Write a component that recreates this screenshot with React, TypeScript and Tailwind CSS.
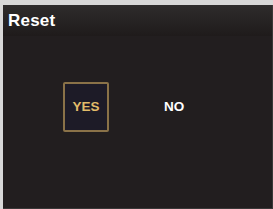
import React from 'react';

export default function App() {
  return (
    <div className="w-[273px] h-[209px] bg-[#d8d8d8] pt-[5px] pl-[3px] overflow-hidden" style={{ fontFamily: '"Liberation Sans", Arial, sans-serif' }}>
      <div className="flex flex-col h-full bg-[#221e1f] border-r border-b border-[#3a3838]">
        <div className="h-[31px] flex items-center px-[5px] bg-gradient-to-b from-[#2e2c2c] to-[#1f1b1b]">
          <span className="text-white font-bold text-[17px] tracking-[0.2px]">Reset</span>
        </div>
        <div className="flex-1 flex items-start pt-[46px]">
          <div className="ml-[60px] w-[46px] h-[50px] border-2 border-[#8a7248] rounded-[2px] bg-[#1d1b27] flex items-center justify-center">
            <span className="text-[#e2bc6a] font-bold text-[13.5px]">YES</span>
          </div>
          <div className="ml-[55px] h-[50px] flex items-center">
            <span className="text-white font-bold text-[13.5px]">NO</span>
          </div>
        </div>
      </div>
    </div>
  );
}
